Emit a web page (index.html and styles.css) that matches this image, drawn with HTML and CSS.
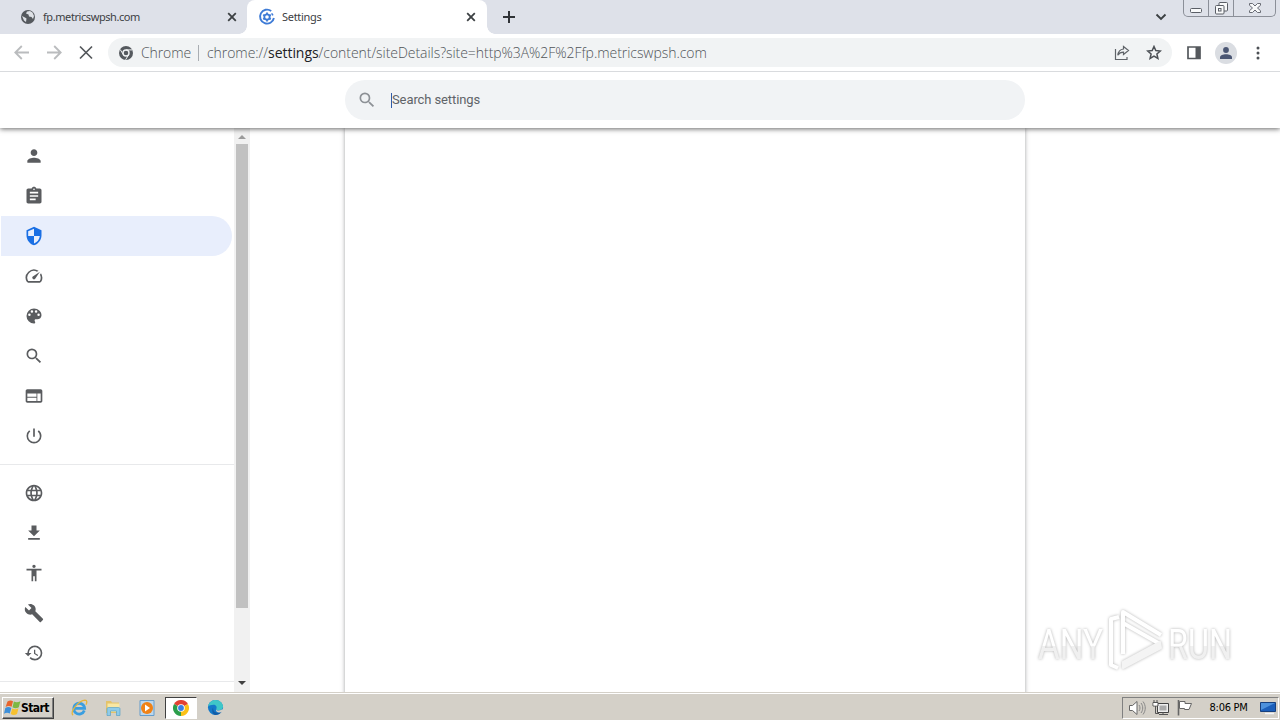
FILE: index.html
```html
<!DOCTYPE html>
<html lang="en">
<head>
    <meta charset="UTF-8">
    <title>Settings</title>
    <link rel="stylesheet" href="styles.css">
</head>
<body>
    <div class="desktop">
        <header class="tab-strip">
            <div class="tab">
                <svg class="tab-icon" width="16" height="16" viewBox="0 0 16 16"><circle cx="8" cy="8" r="7" fill="#55595e"/><path d="M2 7l3 1.5 1.5 1-.5 3.5-2-1.5M7 2.5l-1 2 2.5 1 .5 2 2.5.5 1.5 2 1-3-1.5-3.5L10 2z" fill="#dee1e6"/></svg>
                <span class="tab-title">fp.metricswpsh.com</span>
                <svg class="tab-close" width="10" height="10" viewBox="0 0 10 10"><path d="M1.2 1.2l7.6 7.6M8.8 1.2L1.2 8.8" stroke="#3c4043" stroke-width="1.8"/></svg>
            </div>
            <div class="tab tab-active">
                <svg class="tab-icon" width="18" height="18" viewBox="0 0 18 18"><path d="M13.2 3A7 7 0 1 0 15.9 10" fill="none" stroke="#3e7bd6" stroke-width="1.9"/><path d="M13.6 5.4l1.4 2" stroke="#3e7bd6" stroke-width="1.6"/><circle cx="9" cy="9" r="2.7" fill="none" stroke="#3e7bd6" stroke-width="1.8"/><path d="M9 4.6v1.6M9 11.8v1.6M5.2 6.8l1.4.8M11.4 10.4l1.4.8M5.2 11.2l1.4-.8M11.4 7.6l1.4-.8" stroke="#3e7bd6" stroke-width="1.8"/></svg>
                <span class="tab-title">Settings</span>
                <svg class="tab-close" width="10" height="10" viewBox="0 0 10 10"><path d="M1.2 1.2l7.6 7.6M8.8 1.2L1.2 8.8" stroke="#3c4043" stroke-width="1.8"/></svg>
            </div>
            <svg class="new-tab" width="12" height="12" viewBox="0 0 12 12"><path d="M6 0v12M0 6h12" stroke="#303337" stroke-width="2"/></svg>
            <svg class="tab-search" width="12" height="8" viewBox="0 0 12 8"><path d="M1.5 1.5L6 6l4.500-4.500" fill="none" stroke="#3c4043" stroke-width="1.9"/></svg>
            <div class="window-controls">
                <span class="control"><svg width="12" height="5" viewBox="0 0 12 5"><rect x=".5" y=".5" width="11" height="4" rx="1" fill="#f8f9fa" stroke="#5a5e66"/></svg></span>
                <span class="control control-restore"><svg width="13" height="13" viewBox="0 0 13 13"><g fill="#f8f9fa" stroke="#5a5e66"><rect x="4" y=".5" width="8.500" height="8.500" rx="1"/><rect x=".5" y="3.500" width="8.500" height="8.500" rx="1"/><rect x="3.500" y="6.500" width="2.500" height="2.500"/></g></svg></span>
                <span class="control control-close"><svg width="12" height="10" viewBox="0 0 12 10"><path d="M.5.5h3L6 3 8.500.5h3v1.800L8.500 5l3 2.700v1.800h-3L6 7 3.500 9.500h-3V7.700L3.500 5l-3-2.700z" fill="#f8f9fa" stroke="#5a5e66" stroke-width=".9"/></svg></span>
            </div>
        </header>

        <nav class="toolbar">
            <svg class="nav-btn" width="32" height="32" viewBox="0 0 32 32"><path d="M23 15.500H9.500M15.800 9L9.300 15.500l6.500 6.500" fill="none" stroke="#babcbe" stroke-width="1.800"/></svg>
            <svg class="nav-btn" width="32" height="32" viewBox="0 0 32 32"><path d="M9 15.500h13.500M16.200 9l6.500 6.500-6.500 6.500" fill="none" stroke="#babcbe" stroke-width="1.800"/></svg>
            <svg class="nav-btn" width="32" height="32" viewBox="0 0 32 32"><path d="M10 9.500l12 12M22 9.500l-12 12" stroke="#54585c" stroke-width="1.700"/></svg>
            <div class="omnibox">
                <svg class="site-icon" width="14" height="14" viewBox="0 0 14 14"><circle cx="7" cy="7" r="7" fill="#55595e"/><circle cx="7" cy="7" r="3" fill="#55595e" stroke="#f1f3f4" stroke-width="1.400"/><path d="M7 3.900h6.200M4.300 8.600L1.200 3.500M9.700 8.600L6.600 13.800" stroke="#f1f3f4"/></svg>
                <span class="site-name">Chrome</span>
                <span class="site-divider"></span>
                <span class="url">chrome://<b>settings</b>/content/siteDetails?site=http%3A%2F%2Ffp.metricswpsh.com</span>
                <svg class="share" width="16" height="16" viewBox="0 0 16 16"><path d="M1.500 4v10.500h11.500V12M9.500 1.500l5 4-5 4V7.200C6.500 7.200 5 8.300 3.800 10.200 4.200 6.700 6.200 4.400 9.500 4z" fill="none" stroke="#5f6368" stroke-width="1.200"/></svg>
                <svg class="star" width="16" height="16" viewBox="0 0 16 16"><path d="M8 1.500l1.800 4.100 4.500.4-3.400 3 1 4.400L8 11.100l-3.900 2.300 1-4.400-3.400-3 4.500-.4z" fill="none" stroke="#4c5055" stroke-width="1.500"/></svg>
            </div>
            <svg class="side-panel" width="14" height="14" viewBox="0 0 14 14"><path d="M1 1h12v11.500H1z" fill="none" stroke="#54585c" stroke-width="1.700"/><path d="M8.500 1H13v11.500H8.500z" fill="#54585c"/></svg>
            <span class="avatar"><svg width="12" height="12" viewBox="0 0 12 12" fill="#4a5673"><circle cx="6" cy="3" r="2.900"/><path d="M0 12v-1.500C0 8.300 3 7.300 6 7.300s6 1 6 3.200V12z"/></svg></span>
            <svg class="more" width="4" height="14" viewBox="0 0 4 14" fill="#4c5055"><circle cx="2" cy="2" r="1.500"/><circle cx="2" cy="7" r="1.500"/><circle cx="2" cy="12" r="1.500"/></svg>
        </nav>

        <div class="settings-header">
            <div class="search-box">
                <svg width="20" height="20" viewBox="0 0 24 24" fill="#8d9196"><path d="M15.500 14h-.79l-.28-.27A6.470 6.470 0 0 0 16 9.500 6.500 6.500 0 1 0 9.500 16c1.610 0 3.090-.59 4.230-1.570l.27.28v.79l5 4.990L20.490 19l-4.990-5zm-6 0C7.010 14 5 11.990 5 9.500S7.010 5 9.500 5 14 7.010 14 9.500 11.990 14 9.500 14z"/></svg>
                <span class="caret"></span>
                <span class="placeholder">Search settings</span>
            </div>
        </div>

        <main class="settings">
            <aside class="menu">
                <a class="menu-item"><svg viewBox="0 0 24 24"><path d="M12 12c2.210 0 4-1.790 4-4s-1.790-4-4-4-4 1.790-4 4 1.790 4 4 4zm0 2c-2.670 0-8 1.340-8 4v2h16v-2c0-2.660-5.330-4-8-4z"/></svg></a>
                <a class="menu-item"><svg viewBox="0 0 24 24"><path d="M19 3h-4.180C14.400 1.840 13.300 1 12 1s-2.400.84-2.820 2H5c-1.100 0-2 .9-2 2v14c0 1.100.9 2 2 2h14c1.100 0 2-.9 2-2V5c0-1.100-.9-2-2-2zm-7 0c.55 0 1 .45 1 1s-.45 1-1 1-1-.45-1-1 .45-1 1-1zm2 14H7v-2h7v2zm3-4H7v-2h10v2zm0-4H7V7h10v2z"/></svg></a>
                <a class="menu-item menu-item-selected"><svg viewBox="0 0 24 24"><path d="M12 1L3 5v6c0 5.550 3.840 10.740 9 12 5.160-1.260 9-6.450 9-12V5l-9-4zm0 10.990h7c-.53 4.120-3.280 7.790-7 8.940V12H5V6.300l7-3.110v8.800z"/></svg></a>
                <a class="menu-item"><svg viewBox="0 0 24 24"><path d="M20.380 8.570l-1.230 1.850a8 8 0 0 1-.22 7.580H5.070A8 8 0 0 1 15.580 6.850l1.850-1.230A10 10 0 0 0 3.350 19a2 2 0 0 0 1.720 1h13.850a2 2 0 0 0 1.740-1 10 10 0 0 0-.27-10.440zm-9.790 6.840a2 2 0 0 0 2.830 0l5.660-8.490-8.490 5.660a2 2 0 0 0 0 2.830z"/></svg></a>
                <a class="menu-item"><svg viewBox="0 0 24 24"><path d="M12 3a9 9 0 0 0 0 18c.83 0 1.500-.67 1.500-1.500 0-.39-.15-.74-.39-1.010-.23-.26-.38-.61-.38-.99 0-.83.67-1.500 1.500-1.500H16c2.760 0 5-2.240 5-5 0-4.420-4.030-8-9-8zm-5.500 9a1.500 1.500 0 1 1 0-3 1.500 1.500 0 0 1 0 3zm3-4a1.500 1.500 0 1 1 0-3 1.500 1.500 0 0 1 0 3zm5 0a1.500 1.500 0 1 1 0-3 1.500 1.500 0 0 1 0 3zm3 4a1.500 1.500 0 1 1 0-3 1.500 1.500 0 0 1 0 3z"/></svg></a>
                <a class="menu-item"><svg viewBox="0 0 24 24"><path d="M15.500 14h-.79l-.28-.27A6.470 6.470 0 0 0 16 9.500 6.500 6.500 0 1 0 9.500 16c1.610 0 3.090-.59 4.230-1.570l.27.28v.79l5 4.990L20.490 19l-4.990-5zm-6 0C7.010 14 5 11.990 5 9.500S7.010 5 9.500 5 14 7.010 14 9.500 11.990 14 9.500 14z"/></svg></a>
                <a class="menu-item"><svg viewBox="0 0 24 24"><path d="M20 4H4c-1.100 0-1.990.9-1.990 2L2 18c0 1.100.9 2 2 2h16c1.100 0 2-.9 2-2V6c0-1.100-.9-2-2-2zm-5 14H4v-4h11v4zm0-5H4V9h11v4zm5 5h-4V9h4v9z"/></svg></a>
                <a class="menu-item"><svg viewBox="0 0 24 24"><path d="M13 3h-2v10h2V3zm4.830 2.170l-1.420 1.420A6.920 6.920 0 0 1 19 12a7 7 0 1 1-11.420-5.420L6.170 5.170A8.930 8.930 0 0 0 3 12a9 9 0 0 0 18 0c0-2.740-1.230-5.180-3.170-6.830z"/></svg></a>
                <hr class="menu-divider">
                <a class="menu-item"><svg viewBox="0 0 24 24"><path d="M11.990 2C6.470 2 2 6.480 2 12s4.470 10 9.990 10C17.520 22 22 17.520 22 12S17.520 2 11.990 2zm6.930 6h-2.950a15.650 15.650 0 0 0-1.380-3.560A8.030 8.030 0 0 1 18.920 8zM12 4.040c.83 1.200 1.480 2.530 1.910 3.960h-3.820c.43-1.430 1.080-2.760 1.910-3.960zM4.260 14C4.100 13.360 4 12.690 4 12s.1-1.360.26-2h3.380c-.08.66-.14 1.320-.14 2s.06 1.340.14 2H4.260zm.82 2h2.950c.32 1.250.78 2.450 1.380 3.560A7.990 7.990 0 0 1 5.080 16zm2.950-8H5.080a7.990 7.990 0 0 1 4.330-3.560A15.650 15.650 0 0 0 8.030 8zM12 19.960A14.090 14.090 0 0 1 10.090 16h3.820A14.090 14.090 0 0 1 12 19.960zM14.340 14H9.660c-.09-.66-.16-1.320-.16-2s.07-1.350.16-2h4.680c.09.65.16 1.320.16 2s-.07 1.340-.16 2zm.25 5.560c.6-1.110 1.060-2.310 1.380-3.560h2.950a8.030 8.030 0 0 1-4.330 3.560zM16.360 14c.08-.66.14-1.320.14-2s-.06-1.340-.14-2h3.380c.16.64.26 1.310.26 2s-.1 1.360-.26 2h-3.380z"/></svg></a>
                <a class="menu-item"><svg viewBox="0 0 24 24"><path d="M19 9h-4V3H9v6H5l7 7 7-7zM5 18v2h14v-2H5z"/></svg></a>
                <a class="menu-item"><svg viewBox="0 0 24 24"><path d="M12 2c1.100 0 2 .9 2 2s-.9 2-2 2-2-.9-2-2 .9-2 2-2zm9 7h-6v13h-2v-6h-2v6H9V9H3V7h18v2z"/></svg></a>
                <a class="menu-item"><svg viewBox="0 0 24 24"><path d="M22.700 19l-9.100-9.100c.9-2.300.4-5-1.500-6.900-2-2-5-2.400-7.400-1.300L9 6 6 9 1.600 4.700C.4 7.100.9 10.100 2.900 12.100c1.900 1.900 4.600 2.400 6.900 1.500l9.100 9.100c.4.4 1 .4 1.400 0l2.300-2.300c.5-.4.5-1.100.1-1.400z"/></svg></a>
                <a class="menu-item"><svg viewBox="0 0 24 24"><path d="M13 3a9 9 0 0 0-9 9H1l3.890 3.890.07.14L9 12H6c0-3.870 3.130-7 7-7s7 3.130 7 7-3.130 7-7 7c-1.930 0-3.680-.79-4.940-2.060l-1.420 1.420A8.950 8.950 0 0 0 13 21a9 9 0 0 0 0-18zm-1 5v5l4.280 2.540.72-1.210-3.500-2.080V8H12z"/></svg></a>
                <hr class="menu-divider">
            </aside>
            <div class="scrollbar">
                <span class="scroll-up"></span>
                <span class="scroll-thumb"></span>
                <span class="scroll-down"></span>
            </div>
            <section class="content">
                <div class="card"></div>
            </section>
        </main>

        <footer class="taskbar">
            <button class="start">
                <svg width="17" height="16" viewBox="0 0 17 16"><path d="M3.500 1.500C5.500 0 7.500.2 9 1.200L7.600 6.800C5.700 5.700 3.500 5.800 1.600 7z" fill="#e8642c"/><path d="M9.900 1.600c2 1 4 1 6.500-.4l-1.600 6c-2.200 1.300-4.300 1.200-6.300.1z" fill="#7db843"/><path d="M1.300 8C3.300 6.700 5.400 6.800 7.300 7.900l-1.500 5.700c-1.800-1.100-3.800-1.100-5.800.2z" fill="#3d8fd9"/><path d="M8.200 8.400c2 1 4.200 1 6.300-.2L13 14c-2.200 1.300-4.300 1.200-6.300.1z" fill="#f7c12f"/></svg>
                <span>Start</span>
            </button>
            <div class="quick-launch">
                <span class="launch"><svg width="18" height="18" viewBox="0 0 18 18"><path d="M14.300 11.500A5.400 5.400 0 1 1 14.600 9.300H5" fill="none" stroke="#3a9ee0" stroke-width="2.800"/><path d="M3 16.200C-1 13 9 1.500 15 1.200c2.500 0 2 2.800 1 4.600" fill="none" stroke="#e5b53c" stroke-width="1.300"/></svg></span>
                <span class="launch"><svg width="18" height="18" viewBox="0 0 18 18"><path d="M2 2h5l1 1.500h7V14H2z" fill="#e4c36a"/><path d="M3.500 4.500h12V13h-12z" fill="#f8e7a3"/><path d="M3 16.500V10c0-1 .6-1.500 1.500-1.500h10c.9 0 1.500.5 1.500 1.500v6.500h-3.500V12H6.500v4.500z" fill="#8fcbe8" stroke="#4b9bc5" stroke-width=".6"/></svg></span>
                <span class="launch"><svg width="18" height="18" viewBox="0 0 18 18"><path d="M2 1.500h14v15H2z" fill="#bcd7ed" stroke="#659dcc"/><circle cx="9" cy="9" r="6" fill="#f08216"/><path d="M7 5.500l5 3.500-5 3.500z" fill="#fff"/></svg></span>
                <span class="launch launch-active"><svg width="16" height="16" viewBox="0 0 16 16"><path d="M8 8L1.070 4A8 8 0 0 1 14.930 4z" fill="#e34133"/><path d="M8 8l6.930-4A8 8 0 0 1 8 16z" fill="#fbc116"/><path d="M8 8v8A8 8 0 0 1 1.070 4z" fill="#2b9e4b"/><circle cx="8" cy="8" r="3.800" fill="#fff"/><circle cx="8" cy="8" r="2.900" fill="#397fe5"/></svg></span>
                <span class="launch"><svg width="17" height="17" viewBox="0 0 18 18"><circle cx="9" cy="9" r="8" fill="#1479c9"/><path d="M1.200 8C2 3.500 5 1 9 1c5 0 8 3.700 8 7 0 2.500-2 4-4.500 4-2 0-3-.8-2.500-2 .8-1.800-.8-3.800-3-3.800C4.500 6.200 2 7 1.200 8z" fill="#3fc7c8"/><path d="M6.500 9c-.5 3.500 2 6 5.500 5.500 1.500-.2 3-1 3.800-1.700-1 2-3.400 4.200-6.800 4.200-3 0-4.500-5.500-2.500-8z" fill="#135ca6"/><path d="M9.800 10c-.7 1.500.8 2.300 2.700 2.200 1.800 0 3-.6 3.800-1.500l1 1.800-2.300 1.600c-3.500 1-6.500-1-5.200-4.100z" fill="#d4d0c8"/></svg></span>
            </div>
            <div class="tray">
                <svg width="18" height="16" viewBox="0 0 18 16"><path d="M1.500 5.500h3L9 1.500v13l-4.500-4h-3z" fill="#fff" stroke="#666"/><path d="M11 5c1.300 1.800 1.300 4.200 0 6M13 3c2.300 3 2.300 7 0 10M15 1.500c3 4 3 9 0 13" fill="none" stroke="#888"/></svg>
                <svg width="18" height="16" viewBox="0 0 18 16"><path d="M5.500 3.500h11v9h-11z" fill="#eee" stroke="#444"/><path d="M7.500 5.500h7v5h-7z" fill="#aaa"/><path d="M7 14.500h9M11 12v2.500M2 0v3M5 0v3M1 2.500h5V6H1zM3.500 6v7.500H7" fill="none" stroke="#555"/><path d="M1.500 3h4v2.500h-4z" fill="#fff"/></svg>
                <svg width="18" height="16" viewBox="0 0 18 16"><path d="M2.500 0v15.500" stroke="#666" stroke-width="1.600"/><path d="M3.500 1.500H9v2h6.500L13 9.500H8.500v-1h-5z" fill="#fff" stroke="#666"/></svg>
                <span class="clock">8:06 PM</span>
                <svg width="16" height="16" viewBox="0 0 16 16"><path d="M.5 2.500h15v9H.5z" fill="#1c5fba" stroke="#17407e"/><path d="M1 3h14L1 10z" fill="#4d91dc"/><path d="M5 13.500h9" stroke="#f3f5fa" stroke-width="1.500"/></svg>
            </div>
        </footer>

        <svg class="watermark" width="230" height="76" viewBox="0 0 230 76">
            <defs>
                <linearGradient id="mark" x1="0" y1="0" x2="0" y2="1"><stop offset=".53" stop-color="#fff"/><stop offset=".54" stop-color="#f0f0f0"/></linearGradient>
            </defs>
            <text x="8" y="54" textLength="65" lengthAdjust="spacingAndGlyphs" fill="url(#mark)">ANY</text>
            <g fill="none" stroke="#fff" stroke-width="4" stroke-linejoin="round">
                <path d="M89 12l-8 2v46l7 3"/>
                <path d="M93 49V7l38 23M93 18l37 21"/>
                <path d="M93 63l38-20-1-6-37 20z" fill="#f4f4f4" stroke="#f4f4f4" stroke-width="2"/>
            </g>
            <text x="138" y="54" textLength="64" lengthAdjust="spacingAndGlyphs" fill="url(#mark)">RUN</text>
        </svg>
    </div>
</body>
</html>
```

FILE: styles.css
```css
* {
    box-sizing: border-box;
}

body {
    margin: 0;
    background: #fff;
    color: #3c4043;
    font-family: "Noto Sans", "Open Sans", sans-serif;
    overflow: hidden;
}

svg {
    display: block;
    flex-shrink: 0;
}

.desktop {
    display: flex;
    flex-direction: column;
    width: 1280px;
    height: 720px;
    position: relative;
}

/* Tabs */
.tab-strip {
    display: flex;
    height: 34px;
    background: #dee1e9;
}

.tab {
    display: flex;
    align-items: center;
    width: 247px;
    height: 34px;
    padding: 0 10px 0 20px;
    font-size: 11px;
}

.tab-active {
    width: 240px;
    padding: 0 11px;
    background: #fff;
    border-radius: 8px 8px 0 0;
    position: relative;
}

.tab-active::before,
.tab-active::after {
    content: '';
    position: absolute;
    bottom: 0;
    width: 8px;
    height: 8px;
}

.tab-active::before {
    left: -8px;
    background: radial-gradient(circle at 0 0, transparent 7.5px, #fff 8px);
}

.tab-active::after {
    right: -8px;
    background: radial-gradient(circle at 100% 0, transparent 7.5px, #fff 8px);
}

.tab-title {
    flex: 1;
    margin-left: 7px;
    padding-bottom: 2px;
    letter-spacing: -0.42px;
}

.tab-active .tab-title {
    margin-left: 6px;
    letter-spacing: -0.3px;
}

.new-tab {
    margin: 11px 0 0 16px;
}

.tab-search {
    margin: 13px 16px 0 auto;
}

.window-controls {
    display: flex;
    width: 93px;
    height: 17px;
    margin-right: 4px;
    border: 1px solid #8b8f98;
    border-top: 0;
    border-radius: 0 0 5px 5px;
}

.control {
    display: flex;
    align-items: center;
    justify-content: center;
    width: 25px;
    padding-top: 4px;
    border-right: 1px solid #8b8f98;
}

.control-restore {
    padding-top: 0;
}

.control-close {
    flex: 1;
    padding-top: 0;
    border-right: 0;
}

/* Address bar */
.toolbar {
    display: flex;
    align-items: center;
    height: 38px;
    padding: 0 20px 0 6px;
    border-bottom: 1px solid #d9dbde;
}

.omnibox {
    display: flex;
    align-items: center;
    width: 1064px;
    height: 29px;
    margin-left: 6px;
    padding: 0 10px 0 11px;
    background: #f1f3f4;
    border-radius: 15px;
    color: #505458;
    font-family: "Open Sans", "Noto Sans", sans-serif;
    font-size: 14px;
    font-weight: 300;
    white-space: nowrap;
}

.site-name {
    width: 49px;
    margin-left: 8px;
    letter-spacing: -0.1px;
}

.site-divider {
    width: 1px;
    height: 16px;
    margin: 0 8px;
    background: #a9adb2;
}

.url {
    flex: 1;
    letter-spacing: -0.05px;
}

.url b {
    color: #202124;
    font-weight: 400;
}

.star {
    margin-left: 16px;
}

.side-panel {
    margin-left: 15px;
}

.avatar {
    display: flex;
    align-items: center;
    justify-content: center;
    width: 22px;
    height: 22px;
    margin-left: 14px;
    background: #dadde2;
    border-radius: 50%;
}

.more {
    margin-left: 19px;
}

/* Settings header */
.settings-header {
    display: flex;
    justify-content: center;
    height: 56px;
    padding: 8px 0 0 90px;
    background: #fff;
    box-shadow: 0 1px 5px rgba(0, 0, 0, 0.6);
    clip-path: inset(0 0 -8px 0);
    z-index: 1;
}

.search-box {
    display: flex;
    align-items: center;
    width: 680px;
    height: 40px;
    padding-left: 12px;
    background: #f1f3f5;
    border-radius: 20px;
    color: #5f6368;
    font-family: Roboto, sans-serif;
    font-size: 13px;
}

.caret {
    width: 1px;
    height: 15px;
    margin-left: 14px;
    background: #315ca8;
}

.placeholder {
    padding-bottom: 2px;
    letter-spacing: -0.1px;
}

/* Settings body */
.settings {
    display: flex;
    height: 564px;
    overflow: hidden;
}

.menu {
    width: 234px;
    padding-top: 8px;
}

.menu-item {
    display: flex;
    align-items: center;
    width: 231px;
    height: 40px;
    margin-left: 1px;
    padding-left: 23px;
    border-radius: 0 20px 20px 0;
    fill: #5a5c5f;
}

.menu-item svg {
    width: 20px;
    height: 20px;
}

.menu-item-selected {
    background: #e8eefc;
    fill: #1a6fe4;
}

.menu-divider {
    height: 1px;
    margin: 8px 0;
    border: 0;
    background: #e8e9eb;
}

.scrollbar {
    display: flex;
    flex-direction: column;
    align-items: center;
    width: 16px;
    background: #f1f1f1;
}

.scroll-up {
    margin: 7px 0 5px;
    border: 4px solid transparent;
    border-top: 0;
    border-bottom-color: #9b9b9b;
}

.scroll-thumb {
    width: 12px;
    height: 464px;
    background: #c1c1c1;
}

.scroll-down {
    margin: auto 0 7px;
    border: 4px solid transparent;
    border-bottom: 0;
    border-top-color: #404040;
}

.content {
    flex: 1;
    padding-left: 95px;
}

.card {
    width: 680px;
    height: 600px;
    box-shadow: 0 0 4px rgba(60, 64, 67, 0.5);
}

/* Taskbar */
.taskbar {
    display: flex;
    align-items: center;
    height: 28px;
    padding: 2px 1px 0 2px;
    background: #d4d0c8;
    border-top: 1px solid #d4d0c8;
    box-shadow: inset 0 1px #fff;
    font-family: "DejaVu Sans Condensed", "DejaVu Sans", sans-serif;
    color: #000;
}

.start {
    display: flex;
    align-items: center;
    width: 52px;
    height: 22px;
    padding: 0 1px;
    background: #d4d0c8;
    border: 1px solid;
    border-color: #fff #404040 #404040 #fff;
    box-shadow: inset -1px -1px #808080;
    color: #000;
    font: bold 12px "DejaVu Sans Condensed", "DejaVu Sans", sans-serif;
    letter-spacing: -0.6px;
}

.quick-launch {
    display: flex;
    gap: 2px;
    margin-left: 9px;
}

.launch {
    display: flex;
    align-items: center;
    justify-content: center;
    width: 32px;
    height: 22px;
}

.launch-active {
    background: #fff;
    border: 1px solid;
    border-color: #404040 #fff #fff #404040;
}

.tray {
    display: flex;
    align-items: center;
    gap: 6px;
    width: 157px;
    height: 22px;
    margin-left: auto;
    padding: 0 2px 0 5px;
    border: 1px solid;
    border-color: #808080 #fff #fff #808080;
    font-size: 11px;
}

.clock {
    margin: 0 auto;
    padding-left: 3px;
    letter-spacing: -0.3px;
    white-space: nowrap;
}

.watermark {
    position: absolute;
    left: 1030px;
    top: 605px;
    overflow: visible;
    filter: drop-shadow(0 0 1.5px rgba(0, 0, 0, 0.3));
    font-family: Roboto, sans-serif;
    font-size: 43px;
    font-weight: 400;
}
```
